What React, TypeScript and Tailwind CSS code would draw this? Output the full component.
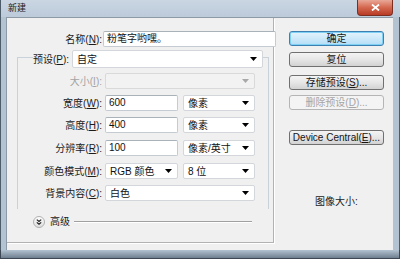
import React from 'react';

const font = "font-['Liberation_Sans','Noto_Sans_CJK_SC',sans-serif]";

const Arrow = ({ disabled }: { disabled?: boolean }) => (
  <svg width="7" height="4" viewBox="0 0 7 4" className="shrink-0">
    <polygon points="0,0 7,0 3.5,4" fill={disabled ? '#a8a8a8' : '#000'} />
  </svg>
);

const Label = ({ text, k, rest = '):', w, disabled }: { text: string; k: string; rest?: string; w: string; disabled?: boolean }) => (
  <div className={`${w} shrink-0 text-right whitespace-nowrap ${disabled ? 'text-[#a3a3a3]' : 'text-[#1b1b1b]'}`}>
    {text}(<span className="underline">{k}</span>{rest}
  </div>
);

const Field = ({ value, w }: { value: string; w: string }) => (
  <div className={`${w} h-[16px] shrink-0 bg-white border border-[#c6cbd1] border-t-[#a9b1b9] rounded-[2px] pl-[3px] leading-[14px] text-[#111]`}>
    {value}
  </div>
);

const Select = ({ value, w, h = 'h-[16px]', disabled }: { value: string; w: string; h?: string; disabled?: boolean }) => (
  <div
    className={`${w} ${h} shrink-0 flex items-center justify-between rounded-[2px] pl-[4px] pr-[5px] border ${
      disabled ? 'bg-[#f2f2f2] border-[#d9d9d9]' : 'bg-white border-[#d3d6da]'
    } text-[#111]`}
  >
    <span>{value}</span>
    <Arrow disabled={disabled} />
  </div>
);

const Button = ({ children, primary, disabled, mt }: { children: React.ReactNode; primary?: boolean; disabled?: boolean; mt: string }) => (
  <div
    className={`${mt} w-[95px] h-[15px] flex items-center justify-center rounded-[3px] border leading-none ${
      primary
        ? 'border-[#3c7fb1] bg-gradient-to-b from-[#e5f4fc] to-[#b4def6] shadow-[inset_0_0_0_1px_#7fd0f5]'
        : disabled
        ? 'border-[#b5b5b5] bg-[#f4f4f4] text-[#a5a5a5]'
        : 'border-[#707070] bg-gradient-to-b from-[#f4f4f4] via-[#e6e6e6] to-[#d2d2d2]'
    } ${disabled ? '' : 'text-[#151515]'}`}
  >
    {children}
  </div>
);

export default function App() {
  return (
    <div className={`w-[400px] h-[259px] overflow-hidden bg-[#b7c6d5] ${font} text-[10px]`}>
      {/* title bar */}
      <div className="h-[17px] flex items-start bg-gradient-to-b from-[#cad6e2] to-[#bccada] border-l border-[#4e5b68]">
        <div className="pl-[7px] pt-[2px] text-[9px] text-[#1c1c1c]">新建</div>
        <div className="ml-auto mr-[7px] w-[36px] h-[16px] flex items-center justify-center rounded-b-[4px] border border-t-0 border-[#7b2e22] bg-gradient-to-b from-[#e8a797] via-[#d4674f] to-[#b83a24]">
          <svg width="9" height="7" viewBox="0 0 9 7">
            <path d="M1 0.5 L8 6.5 M8 0.5 L1 6.5" stroke="#fff" strokeWidth="1.8" />
          </svg>
        </div>
      </div>

      <div className="flex h-[233px]">
        <div className="w-[6px] border-l border-[#4e5b68] bg-[#b4c3d2]" />
        {/* client */}
        <div className="w-[387px] bg-[#f0f0f0] border-l border-t border-[#8d99a5] flex">
          {/* left */}
          <div className="w-[267px] h-[225px] border-r border-b border-[#b2b2b2] shadow-[1px_1px_0_#fff]">
            <div className="mt-[13px] flex items-center">
              <Label text="名称" k="N" w="w-[95px]" />
              <div className="ml-[1px]">
                <Field value="粉笔字哟嘿。" w="w-[173px]" />
              </div>
            </div>

            <div className="mt-[10px] ml-[10px] w-[252px] h-[152px] border border-b-0 border-[#c9d2da]">
              <div className="-mt-[8px] h-[18px] flex items-center">
                <div className="ml-[15px] w-[39px] bg-[#f0f0f0] text-[#1b1b1b]">
                  预设(<span className="underline">P</span>):
                </div>
                <Select value="自定" w="w-[191px]" h="h-[18px]" />
              </div>

              <div className="mt-[5px] flex items-center">
                <Label text="大小" k="I" w="w-[84px]" disabled />
                <div className="ml-[3px]">
                  <Select value="" w="w-[150px]" disabled />
                </div>
              </div>

              <div className="mt-[6px] flex items-center">
                <Label text="宽度" k="W" w="w-[84px]" />
                <div className="ml-[3px] flex gap-[5px]">
                  <Field value="600" w="w-[73px]" />
                  <Select value="像素" w="w-[72px]" />
                </div>
              </div>

              <div className="mt-[6px] flex items-center">
                <Label text="高度" k="H" w="w-[84px]" />
                <div className="ml-[3px] flex gap-[5px]">
                  <Field value="400" w="w-[73px]" />
                  <Select value="像素" w="w-[72px]" />
                </div>
              </div>

              <div className="mt-[7px] flex items-center">
                <Label text="分辨率" k="R" w="w-[84px]" />
                <div className="ml-[3px] flex gap-[5px]">
                  <Field value="100" w="w-[73px]" />
                  <Select value="像素/英寸" w="w-[72px]" />
                </div>
              </div>

              <div className="mt-[7px] flex items-center">
                <Label text="颜色模式" k="M" w="w-[84px]" />
                <div className="ml-[3px] flex gap-[5px]">
                  <Select value="RGB 颜色" w="w-[73px]" />
                  <Select value="8 位" w="w-[72px]" />
                </div>
              </div>

              <div className="mt-[6px] flex items-center">
                <Label text="背景内容" k="C" w="w-[84px]" />
                <div className="ml-[3px]">
                  <Select value="白色" w="w-[150px]" />
                </div>
              </div>
            </div>

            <div className="mt-[7px] flex items-center h-[11px]">
              <svg width="12" height="12" viewBox="0 0 12 12" className="ml-[26px] shrink-0">
                <defs>
                  <linearGradient id="adv" x1="0" y1="0" x2="0" y2="1">
                    <stop offset="0" stopColor="#ffffff" />
                    <stop offset="1" stopColor="#dcdcdc" />
                  </linearGradient>
                </defs>
                <circle cx="6" cy="6" r="5.5" fill="url(#adv)" stroke="#b0b0b0" />
                <path d="M3.8 3.6 L6 5.4 L8.2 3.6 M3.8 6.4 L6 8.2 L8.2 6.4" stroke="#222" strokeWidth="1.2" fill="none" />
              </svg>
              <span className="ml-[5px] text-[#1b1b1b]">高级</span>
              <div className="ml-[4px] w-[178px] h-px bg-[#a0a0a0] border-b border-white box-content" />
            </div>
          </div>

          {/* right */}
          <div className="ml-[15px] flex flex-col">
            <Button primary mt="mt-[13px]">确定</Button>
            <Button mt="mt-[6px]">复位</Button>
            <Button mt="mt-[8px]">
              存储预设(<span className="underline">S</span>)...
            </Button>
            <Button disabled mt="mt-[5px]">
              删除预设(<span className="underline">D</span>)...
            </Button>
            <Button mt="mt-[20px]">
              Device Central(<span className="underline">E</span>)...
            </Button>
            <div className="mt-[52px] ml-[26px] text-[#1b1b1b] leading-[10px]">图像大小:</div>
          </div>
        </div>
        <div className="w-[7px] bg-[#b4c3d2] border-r border-[#4e5b68]" />
      </div>

      <div className="h-[9px] bg-gradient-to-b from-[#b4c3d2] to-[#6f7f8f] border-b border-l border-r border-[#3d4854]" />
    </div>
  );
}
